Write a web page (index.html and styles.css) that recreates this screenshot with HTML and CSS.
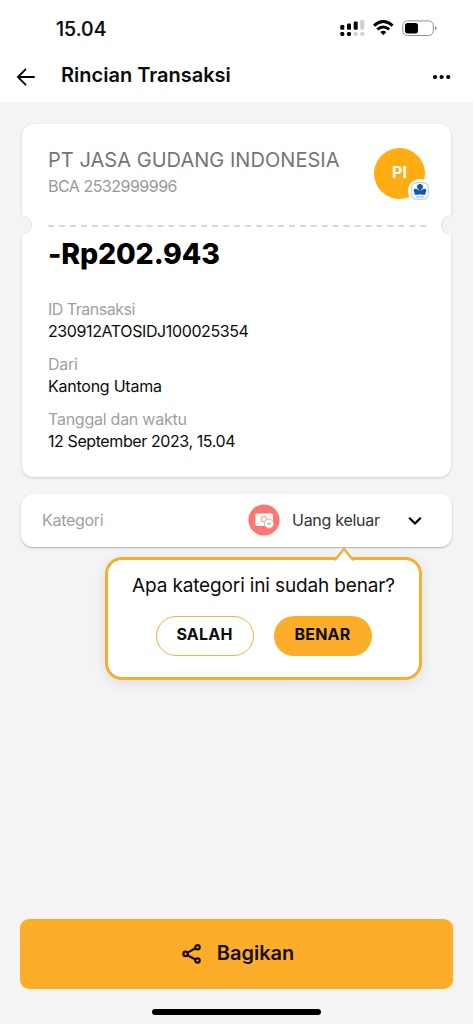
FILE: index.html
```html
<!DOCTYPE html>
<html lang="id">
<head>
<meta charset="utf-8">
<meta name="viewport" content="width=device-width, initial-scale=1">
<title>Rincian Transaksi</title>
<link rel="stylesheet" href="styles.css">
</head>
<body>
<div class="screen">
  <header class="top">
    <div class="status">
      <span class="clock">15.04</span>
      <svg class="status-icons" width="98" height="20" viewBox="0 0 98 20">
        <g fill="#000">
          <rect x="0.3" y="6" width="4" height="4.7" rx="1.2"/><rect x="7" y="4.6" width="4" height="6.1" rx="1.2"/><rect x="13.7" y="2.5" width="4" height="8.2" rx="1.2"/>
          <rect x="0.3" y="13" width="4" height="4" rx="1.4"/><rect x="7" y="13" width="4" height="4" rx="1.4"/>
        </g>
        <g fill="#d0d0d0"><rect x="20.2" y="1" width="4" height="9.7" rx="1.2"/><rect x="13.7" y="13" width="4" height="4" rx="1.4"/><rect x="20.2" y="13" width="4" height="4" rx="1.4"/></g>
        <g fill="none" stroke="#000" stroke-width="2.9"><path d="M34 6.6Q43.3-1.4 52.6 6.6"/><path d="M37.3 10.4Q43.3 5.4 49.3 10.4"/></g>
        <path d="M40.3 13Q43.3 10.7 46.3 13L43.3 16.2Z" fill="#000"/>
        <rect x="62.8" y="1.9" width="30.5" height="14.6" rx="4.6" fill="none" stroke="#8f8f8f"/>
        <rect x="65" y="4" width="13" height="10.4" rx="2.6"/>
        <path d="M95 7q3.2 2.2 0 4.4z" fill="#8f8f8f"/>
      </svg>
    </div>
    <div class="nav">
      <svg width="20" height="20" viewBox="0 0 20 20" fill="none" stroke="#000" stroke-width="1.8"><path d="M18.7 10H2M10 1.9L1.9 10l8.1 8.1"/></svg>
      <h1>Rincian Transaksi</h1>
      <svg width="20" height="6" viewBox="0 0 20 6"><circle cx="3" cy="3" r="2.1"/><circle cx="9.6" cy="3" r="2.1"/><circle cx="16.2" cy="3" r="2.1"/></svg>
    </div>
  </header>

  <main>
    <section class="ticket">
      <div class="payee">
        <div>
          <div class="payee-name">PT JASA GUDANG INDONESIA</div>
          <div class="payee-account">BCA 2532999996</div>
        </div>
        <div class="avatar"><span>PI</span>
          <svg class="bank" width="24" height="24" viewBox="0 0 24 24">
            <circle cx="12" cy="12" r="12" fill="#fff"/>
            <path d="M6.2 4.2Q12 2.8 17.8 4.2Q19.6 4.7 20 7Q21 12 20 17Q19.6 19.3 17.8 19.8Q12 21.2 6.2 19.8Q4.4 19.3 4 17Q3 12 4 7Q4.4 4.7 6.2 4.2Z" fill="#fff" stroke="#8fb8de" stroke-width=".8"/>
            <g fill="#1459a8"><circle cx="12" cy="7.8" r="2.9"/><path d="M6.4 9.8q3.6-.7 5.1 2.6v3.3H6.3q1.1-1.4-.3-2.8q-1-1.5.4-3.1zM17.6 9.8q-3.6-.7-5.1 2.6v3.3h5.2q-1.1-1.4.3-2.8q1-1.5-.4-3.1z"/><path d="M11 9h2v6h-2z"/></g>
            <path d="M8 18h8" stroke="#5f8fc4" stroke-width="1" stroke-dasharray="1.5 .5"/>
          </svg>
        </div>
      </div>
      <svg class="perforation" width="383" height="2" viewBox="0 0 383 2"><path d="M0 1H383" stroke="#cbcbcb" stroke-width="1.4" stroke-dasharray="6 4.95"/></svg>
      <div class="amount">-Rp202.943</div>
      <dl>
        <div><dt class="l-id">ID Transaksi</dt><dd class="v-id">230912ATOSIDJ100025354</dd></div>
        <div><dt class="l-from">Dari</dt><dd class="v-from">Kantong Utama</dd></div>
        <div><dt class="l-date">Tanggal dan waktu</dt><dd class="v-date">12 September 2023, 15.04</dd></div>
      </dl>
    </section>

    <section class="category">
      <span class="category-label">Kategori</span>
      <svg class="category-icon" width="32" height="32" viewBox="0 0 32 32">
        <circle cx="16" cy="16" r="15.6" fill="#fb7774"/>
        <rect x="7.3" y="9.4" width="17.6" height="12.6" rx="1.8" fill="#fff"/>
        <circle cx="16" cy="15" r="2.9" fill="none" stroke="#fb9290"/>
        <path d="M9.2 13v-1.7h1.7M21.3 11.3H23V13M9.2 18.3V20h1.7" fill="none" stroke="#fdc0be" stroke-width=".7"/>
        <circle cx="21" cy="19.8" r="4.7" fill="#fff" stroke="#fb9290" stroke-width=".8"/>
        <path d="M19 19.8h4" stroke="#fb7774" stroke-width="1"/>
      </svg>
      <span class="category-value">Uang keluar</span>
      <svg class="chevron" width="14" height="10" viewBox="0 0 14 10" fill="none" stroke="#000" stroke-width="2.2"><path d="M1.2 1.7L7 7.5l5.8-5.8"/></svg>
      <div class="popover">
        <svg class="pointer" width="22" height="15" viewBox="0 0 22 15"><path d="M2 11L11 1.6L20 11V15H2Z" fill="#fff"/><path d="M1 13L3 11.8L11 2L19 11.8L21 13" fill="none" stroke="#f2ae36" stroke-width="2.2"/></svg>
        <p>Apa kategori ini sudah benar?</p>
        <div class="answers">
          <button class="answer wrong">SALAH</button>
          <button class="answer right">BENAR</button>
        </div>
      </div>
    </section>
  </main>

  <footer>
    <button class="share">
      <svg width="20" height="22" viewBox="0 0 20 22" fill="none" stroke="#180d02" stroke-width="2.2"><path d="M5.6 9.6L13.4 5.3M5.6 12.2L13.4 16.5"/><circle cx="3.6" cy="10.9" r="2.2"/><circle cx="15.5" cy="4.3" r="2.2"/><circle cx="15.5" cy="17.5" r="2.2"/></svg>
      <span>Bagikan</span>
    </button>
    <div class="home"></div>
  </footer>
</div>
</body>
</html>
```
FILE: styles.css
```css
* { box-sizing: border-box; }
body { margin: 0; background: #f4f4f4; font-family: Inter, "Liberation Sans", sans-serif; color: #0c0c0c; }
svg { display: block; flex: none; }
button { border: 0; padding: 0; font: inherit; color: inherit; }
h1, p, dl, dd { margin: 0; }
.screen { width: 473px; height: 1024px; display: flex; flex-direction: column; overflow: hidden; white-space: nowrap; }

.top { height: 102px; background: #fff; flex: none; }
.status { height: 50px; padding: 19px 35px 0 56px; display: flex; justify-content: space-between; }
.clock { font-size: 19.5px; font-weight: 500; line-height: 20px; -webkit-text-stroke: .2px #0c0c0c; }
.nav { height: 50px; padding: 0 20px 0 16px; display: flex; align-items: center; }
.nav svg { margin-top: 4px; }
.nav svg:last-child { margin-left: auto; margin-right: 1px; }
.nav h1 { margin-left: 25px; font-size: 20px; line-height: 24px; font-weight: 600; }

main { padding: 22px 22px 0; flex: 1; }
.ticket { position: relative; height: 353px; padding: 24px 20px 0 26px; border-radius: 12px; background: #fff; box-shadow: 0 1px 3px rgba(0,0,0,.16); }
.ticket::before, .ticket::after { content: ""; position: absolute; top: 91px; width: 12px; height: 20px; background: #f4f4f4; }
.ticket::before { left: -2px; border-radius: 0 10px 10px 0; box-shadow: inset -1px 0 1px #e9e9e9; }
.ticket::after { right: -2px; border-radius: 10px 0 0 10px; box-shadow: inset 1px 0 1px #dedede; }
.payee { height: 76px; display: flex; justify-content: space-between; }
.payee-name { font-size: 20px; line-height: 24px; letter-spacing: .04px; color: #757575; }
.payee-account { margin-top: 3px; font-size: 16px; line-height: 22px; letter-spacing: -.5px; color: #999; }
.avatar { position: relative; width: 51px; height: 51px; margin: 0 6px 0 0; border-radius: 50%; background: #ffad12; color: #fff; font-size: 16px; font-weight: 700; line-height: 49px; text-align: center; }
.bank { position: absolute; left: 34px; top: 31px; }
.perforation { margin-top: 1px; }
.amount { margin-top: 10px; font-size: 28.5px; line-height: 34px; letter-spacing: -.15px; font-weight: 800; color: #000; }
dl { margin-top: 27px; display: grid; gap: 11px; font-size: 16px; line-height: 22px; }
dt { color: #a0a0a0; }
.l-id { letter-spacing: -.5px; }
.v-id { letter-spacing: -.39px; }
.l-from { letter-spacing: -.3px; }
.v-from { letter-spacing: -.24px; }
.l-date { letter-spacing: -.25px; }
.v-date { letter-spacing: -.41px; }

.category { position: relative; height: 53px; margin: 17px -1px 0; padding: 0 30px 0 21px; display: flex; align-items: center; background: #fff; border-radius: 12px; box-shadow: 0 1px 2px #a9b2b9; font-size: 16px; }
.category-label { width: 206px; margin-top: -2px; letter-spacing: -.3px; color: #a0a0a0; }
.category-icon { margin-top: -1px; }
.category-value { margin: -2px 0 0 12px; letter-spacing: -.27px; color: #333; }
.chevron { margin-left: auto; }
.popover { position: absolute; left: 84px; top: 63px; width: 317px; height: 123px; padding-top: 15px; border: 3px solid #f2ae36; border-radius: 17px; background: #fff; box-shadow: 0 3px 14px rgba(0,0,0,.09); text-align: center; }
.pointer { position: absolute; left: 225px; top: -13px; }
.popover p { font-size: 19px; line-height: 22px; letter-spacing: -.14px; }
.answers { margin-top: 19px; display: flex; justify-content: center; gap: 20px; }
.answer { width: 98px; height: 40px; padding-bottom: 4px; border-radius: 20px; font-size: 16px; font-weight: 700; letter-spacing: .2px; }
.wrong { background: #fff; border: 1px solid #efb344; }
.right { background: #fcae2b; }

footer { height: 105px; padding: 0 20px; flex: none; }
.share { width: 433px; height: 70px; padding-left: 3px; border-radius: 9px; background: #fcae2b; color: #180d02; display: flex; align-items: center; justify-content: center; gap: 15px; font-size: 20px; font-weight: 600; }
.share span { margin-top: -2px; }
.home { width: 169px; height: 6px; margin: 20px auto 0; border-radius: 3px; background: #000; }
```
